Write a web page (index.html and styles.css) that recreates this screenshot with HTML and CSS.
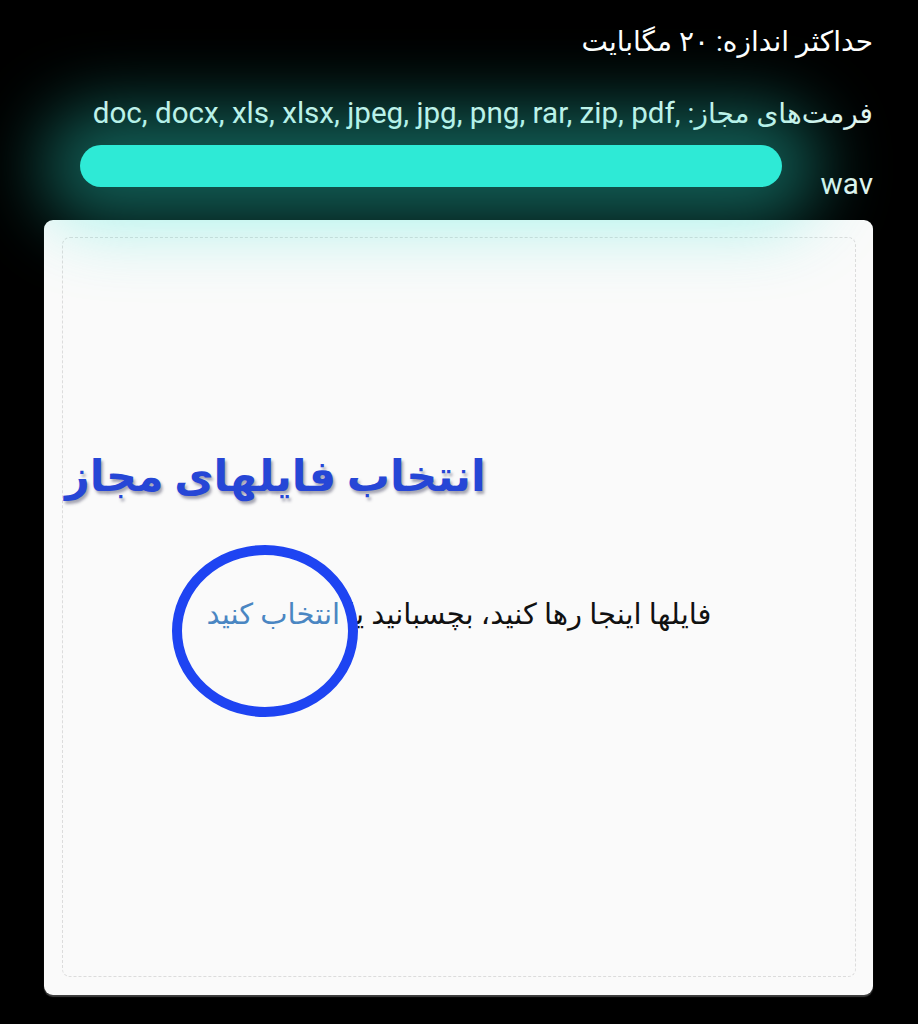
FILE: index.html
```html
<!DOCTYPE html>
<html lang="fa">
<head>
<meta charset="utf-8">
<title>آپلود فایل</title>
<link rel="stylesheet" href="styles.css">
</head>
<body>
<div class="page">
  <div class="info">
    <p class="limit">حداکثر اندازه: ۲۰ مگابایت</p>
    <p class="formats">فرمت‌های مجاز: <span class="en" lang="en">doc, docx, xls, xlsx, jpeg, jpg, png, rar, zip, pdf, wav</span></p>
  </div>
  <div class="card">
    <div class="drop">
      <h2 class="title">انتخاب فایلهای مجاز</h2>
      <p class="hint">فایلها اینجا رها کنید، بچسبانید یا <a class="pick" href="#">انتخاب کنید</a></p>
    </div>
  </div>
  <div class="highlight"></div>
  <div class="ring"></div>
</div>
</body>
</html>
```

FILE: styles.css
```css
html, body {
  margin: 0;
  padding: 0;
  background: #000;
}

body {
  font-family: Roboto, "DejaVu Sans", sans-serif;
  color: #fff;
}

.page {
  position: relative;
  width: 918px;
  height: 1024px;
  overflow: hidden;
  padding: 6px 45px 0 44px;
  box-sizing: border-box;
}

.info {
  direction: rtl;
  text-align: right;
  padding-left: 35px;
}

.limit,
.formats {
  margin: 0;
  font-size: 28px;
  line-height: 72px;
}

.formats {
  color: #e3f5f0;
  line-height: 70px;
}

.en {
  font-size: 29.6px;
}

.card {
  position: relative;
  z-index: 1;
  height: 775px;
  background: #fafafa;
  border-radius: 9px;
  padding: 17px 17px 18px 18px;
  box-sizing: border-box;
  box-shadow: 0 2px 1px rgba(255, 255, 255, 0.25);
}

.drop {
  height: 100%;
  box-sizing: border-box;
  border: 1.5px dashed #dcdcdc;
  border-radius: 8px;
  padding-top: 208px;
  direction: rtl;
}

.title {
  margin: 0 0 0 2px;
  text-align: left;
  font-size: 43px;
  line-height: 60px;
  font-weight: bold;
  color: #2646d6;
  text-shadow: 2px 3px 3px rgba(60, 60, 90, 0.45);
}

.hint {
  margin: 90px 0 0;
  text-align: center;
  font-size: 29px;
  line-height: 36px;
  color: #111;
}

.pick {
  color: #4a86c2;
  text-decoration: none;
}

.highlight {
  position: absolute;
  z-index: 2;
  left: 80px;
  top: 145px;
  width: 702px;
  height: 42px;
  border-radius: 21px;
  background: #2eead6;
  box-shadow: 0 0 70px 38px rgba(46, 233, 213, 0.4);
  pointer-events: none;
}

.ring {
  position: absolute;
  z-index: 3;
  left: 172px;
  top: 545px;
  width: 186px;
  height: 172px;
  box-sizing: border-box;
  border: 10px solid #1e44f2;
  border-radius: 50%;
  pointer-events: none;
}
```
